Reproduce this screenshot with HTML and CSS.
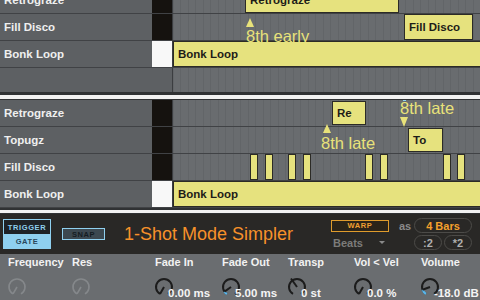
FILE: index.html
```html
<!DOCTYPE html>
<html lang="en">
<head>
  <meta charset="UTF-8">
  <title>Simpler clips</title>
  <link rel="stylesheet" href="styles.css">
</head>
<body>
  <div class="screen">

    <section class="arr arr-top">
      <div class="track cut">
        <div class="name">Retrograze</div><div class="slot"></div>
        <div class="lane"><div class="clip" style="left:72px;width:154px">Retrograze</div></div>
      </div>
      <div class="track">
        <div class="name">Fill Disco</div><div class="slot"></div>
        <div class="lane"><div class="clip" style="left:231px;width:69px">Fill Disco</div></div>
      </div>
      <div class="track">
        <div class="name">Bonk Loop</div><div class="slot stop"></div>
        <div class="lane"><div class="clip" style="left:0;width:320px">Bonk Loop</div></div>
      </div>
      <div class="track blank">
        <div class="name"></div>
        <div class="lane"></div>
      </div>
      <div class="note note-early">
        <span class="arrow up"></span>
        <span class="note-text">8th early</span>
      </div>
    </section>

    <div class="divider"></div>

    <section class="arr arr-mid">
      <div class="track">
        <div class="name">Retrograze</div><div class="slot"></div>
        <div class="lane"><div class="clip small" style="left:159px;width:34px">Re</div></div>
      </div>
      <div class="track">
        <div class="name">Topugz</div><div class="slot"></div>
        <div class="lane"><div class="clip small" style="left:235px;width:35px">To</div></div>
      </div>
      <div class="track">
        <div class="name">Fill Disco</div><div class="slot"></div>
        <div class="lane">
          <div class="hit" style="left:77px"></div>
          <div class="hit" style="left:92px"></div>
          <div class="hit" style="left:115px"></div>
          <div class="hit" style="left:130px"></div>
          <div class="hit" style="left:192px"></div>
          <div class="hit" style="left:207px"></div>
          <div class="hit" style="left:270px"></div>
          <div class="hit" style="left:284px"></div>
        </div>
      </div>
      <div class="track">
        <div class="name">Bonk Loop</div><div class="slot stop"></div>
        <div class="lane"><div class="clip" style="left:0;width:320px">Bonk Loop</div></div>
      </div>
      <div class="note note-late1">
        <span class="arrow up"></span>
        <span class="note-text">8th late</span>
      </div>
      <div class="note note-late2">
        <span class="cue"></span>
        <span class="note-text">8th late</span>
        <span class="arrow down"></span>
      </div>
    </section>

    <div class="divider thin"></div>

    <section class="device">
      <div class="dev-head">
        <div class="mode-btn">
          <span class="mode-off">TRIGGER</span>
          <span class="mode-on">GATE</span>
        </div>
        <div class="snap">SNAP</div>
        <div class="title">1-Shot Mode Simpler</div>
        <div class="warp-box">
          <span class="warp">WARP</span>
          <span class="as">as</span>
          <span class="pill bars">4 Bars</span>
          <span class="beats">Beats <span class="caret"></span></span>
          <span class="half-dbl"><span class="pill">:2</span><span class="pill">*2</span></span>
        </div>
      </div>

      <div class="params">
        <div class="param">
          <div class="plabel">Frequency</div>
          <div class="pctl">
            <svg class="knob off" width="22" height="22" viewBox="0 0 22 22"><path d="M7 17.93 A8 8 0 1 1 15 17.93"/><line x1="11" y1="11" x2="7" y2="17.93"/></svg>
          </div>
        </div>
        <div class="param">
          <div class="plabel">Res</div>
          <div class="pctl">
            <svg class="knob off" width="22" height="22" viewBox="0 0 22 22"><path d="M7 17.93 A8 8 0 1 1 15 17.93"/><line x1="11" y1="11" x2="7" y2="17.93"/></svg>
          </div>
        </div>
        <div class="param">
          <div class="plabel">Fade In</div>
          <div class="pctl">
            <svg class="knob" width="22" height="22" viewBox="0 0 22 22"><path d="M7 17.93 A8 8 0 1 1 15 17.93"/><line x1="11" y1="11" x2="7" y2="17.93"/></svg>
            <span class="val">0.00 ms</span>
          </div>
        </div>
        <div class="param">
          <div class="plabel">Fade Out</div>
          <div class="pctl">
            <svg class="knob" width="22" height="22" viewBox="0 0 22 22"><path d="M7 17.93 A8 8 0 1 1 15 17.93"/><path class="amt" d="M7 17.93 A8 8 0 0 1 4.45 15.59"/><line x1="11" y1="11" x2="4.45" y2="15.59"/></svg>
            <span class="val">5.00 ms</span>
          </div>
        </div>
        <div class="param">
          <div class="plabel">Transp</div>
          <div class="pctl">
            <svg class="knob" width="22" height="22" viewBox="0 0 22 22"><path d="M7 17.93 A8 8 0 1 1 15 17.93"/><line x1="11" y1="11" x2="5" y2="2.5"/></svg>
            <span class="val">0 st</span>
          </div>
        </div>
        <div class="param">
          <div class="plabel">Vol &lt; Vel</div>
          <div class="pctl">
            <svg class="knob" width="22" height="22" viewBox="0 0 22 22"><path d="M7 17.93 A8 8 0 1 1 15 17.93"/><line x1="11" y1="11" x2="7" y2="17.93"/></svg>
            <span class="val">0.0 %</span>
          </div>
        </div>
        <div class="param">
          <div class="plabel">Volume</div>
          <div class="pctl">
            <svg class="knob" width="22" height="22" viewBox="0 0 22 22"><path d="M7 17.93 A8 8 0 1 1 15 17.93"/><path class="amt" d="M7 17.93 A8 8 0 0 1 3.48 13.74"/><line x1="11" y1="11" x2="3.48" y2="13.74"/></svg>
            <span class="val">-18.0 dB</span>
          </div>
        </div>
      </div>
    </section>

  </div>
</body>
</html>
```

FILE: styles.css
```css
* {
  box-sizing: border-box;
}

body {
  margin: 0;
  background: #2a2927;
  font-family: "Liberation Sans", Arial, sans-serif;
}

.screen {
  width: 480px;
  height: 300px;
  overflow: hidden;
  display: flex;
  flex-direction: column;
}

/* arrangement */

.arr {
  position: relative;
  overflow: hidden;
  flex: none;
}

.arr-top {
  height: 92px;
}

.arr-mid {
  height: 108px;
}

.track {
  display: flex;
  height: 27px;
  border-bottom: 1px solid #404245;
}

.track.cut {
  margin-top: -13px;
}

.track.blank {
  height: 24px;
  border-bottom: none;
}

.name {
  width: 152px;
  flex: none;
  background: #5d6063;
  color: #efefef;
  font-weight: bold;
  font-size: 11.5px;
  padding-left: 4px;
  display: flex;
  align-items: center;
  white-space: nowrap;
}

.track.blank .name {
  width: 172px;
}

.slot {
  width: 20px;
  flex: none;
  background: #15120f;
}

.slot.stop {
  background: #f8f8f8;
}

.lane {
  flex: 1;
  position: relative;
  border-left: 1px solid #3b3d40;
  background-color: #696c6f;
  background-image: repeating-linear-gradient(to right, #626568 0 1px, transparent 1px 7.5px);
}

.clip {
  position: absolute;
  top: 0;
  height: 26px;
  display: flex;
  align-items: center;
  padding-left: 4px;
  background: #e6e27e;
  border: 1px solid #2c2b26;
  color: #1d1c18;
  font-weight: bold;
  font-size: 11.5px;
  white-space: nowrap;
  overflow: hidden;
}

.clip.small {
  top: 1px;
  height: 24px;
}

.hit {
  position: absolute;
  top: 0;
  width: 8px;
  height: 26px;
  background: #e6e27e;
  border: 1px solid #2c2b26;
}

/* timing notes */

.note {
  position: absolute;
  display: flex;
  flex-direction: column;
  align-items: flex-start;
  color: #e8e27a;
}

.note-text {
  font-size: 16.5px;
  line-height: 16px;
  white-space: nowrap;
}

.arrow {
  width: 0;
  height: 0;
  border-left: 4.5px solid transparent;
  border-right: 4.5px solid transparent;
}

.arrow.up {
  border-bottom: 9px solid #e8e27a;
  margin-bottom: 1px;
}

.arrow.down {
  border-top: 10px solid #e8e27a;
  margin-top: 1px;
}

.note-early {
  left: 246px;
  top: 18px;
}

.note-late1 {
  left: 321px;
  top: 24px;
}

.note-late1 .arrow {
  margin-left: 2px;
  margin-bottom: 2px;
}

.note-late2 {
  left: 400px;
  top: 0;
}

.cue {
  position: absolute;
  left: 3px;
  top: -1px;
  width: 3px;
  height: 2px;
  background: #8fd6f5;
}

/* section lines */

.divider {
  flex: none;
  height: 8px;
  background: #f2f2f2;
  border-top: 3px solid #303234;
  border-bottom: 1px solid #303234;
}

.divider.thin {
  height: 6px;
  border-top-width: 2px;
}

/* simpler device */

.device {
  flex: 1;
  display: flex;
  flex-direction: column;
}

.dev-head {
  height: 40px;
  flex: none;
  background: #292826;
  display: flex;
  align-items: center;
  padding: 0 8px 0 3px;
}

.mode-btn {
  width: 48px;
  height: 30px;
  display: flex;
  flex-direction: column;
  border: 1px solid #8fd0ef;
  font-size: 7.5px;
  font-weight: bold;
  letter-spacing: 0.6px;
  text-align: center;
}

.mode-btn span {
  flex: 1;
  display: flex;
  align-items: center;
  justify-content: center;
}

.mode-off {
  background: #1e2226;
  color: #8fd0ef;
}

.mode-on {
  background: #8fd0ef;
  color: #28465a;
}

.snap {
  margin-left: 11px;
  width: 43px;
  height: 12px;
  border: 1px solid #8fd0ef;
  background: #3c4850;
  color: #141c22;
  font-size: 7.5px;
  font-weight: bold;
  letter-spacing: 0.6px;
  display: flex;
  align-items: center;
  justify-content: center;
}

.title {
  margin-left: 19px;
  color: #f7912a;
  font-size: 18px;
  white-space: nowrap;
}

.warp-box {
  margin-left: auto;
  display: grid;
  grid-template-columns: 60px 23px 58px;
  grid-template-rows: 15px 15px;
  row-gap: 2px;
  align-items: center;
}

.warp {
  width: 58px;
  height: 12px;
  border: 1.5px solid #e09c2c;
  background: #2b2419;
  color: #f0a032;
  font-size: 7.5px;
  font-weight: bold;
  letter-spacing: 0.6px;
  display: flex;
  align-items: center;
  justify-content: center;
}

.as {
  color: #8a8a8a;
  font-size: 11px;
  font-weight: bold;
  padding-left: 8px;
}

.pill {
  height: 15px;
  border: 1px solid #4c4b48;
  border-radius: 8px;
  color: #b0b0b0;
  font-size: 11px;
  font-weight: bold;
  display: flex;
  align-items: center;
  justify-content: center;
}

.pill.bars {
  color: #f5a02c;
}

.beats {
  grid-column: 1 / 3;
  padding-left: 2px;
  color: #7c7c7a;
  font-size: 11px;
  font-weight: bold;
  display: flex;
  align-items: center;
}

.caret {
  margin-left: 16px;
  width: 0;
  height: 0;
  border-left: 3px solid transparent;
  border-right: 3px solid transparent;
  border-top: 3px solid #8a8a8a;
}

.half-dbl {
  display: grid;
  grid-template-columns: 1fr 1fr;
  gap: 2px;
}

.params {
  flex: 1;
  background: #6a6d70;
  display: grid;
  grid-template-columns: 64px 83px 67px 66px 66px 67px 1fr;
  padding: 2px 0 0 8px;
}

.param {
  display: flex;
  flex-direction: column;
}

.plabel {
  color: #f2f2f2;
  font-size: 11px;
  font-weight: bold;
  line-height: 13px;
  white-space: nowrap;
}

.pctl {
  margin-top: 7px;
  display: flex;
  align-items: flex-end;
  height: 22px;
}

.knob {
  margin-left: -2px;
  fill: none;
  stroke: #1c1c1c;
  stroke-width: 2;
}

.knob.off {
  stroke: #85888b;
  stroke-width: 1.6;
}

.knob .amt {
  stroke: #5ab6ea;
  stroke-width: 2.2;
}

.val {
  margin-left: -7px;
  margin-bottom: -1px;
  color: #f4f4f4;
  font-size: 11.5px;
  font-weight: bold;
  line-height: 11px;
  white-space: nowrap;
}
```
